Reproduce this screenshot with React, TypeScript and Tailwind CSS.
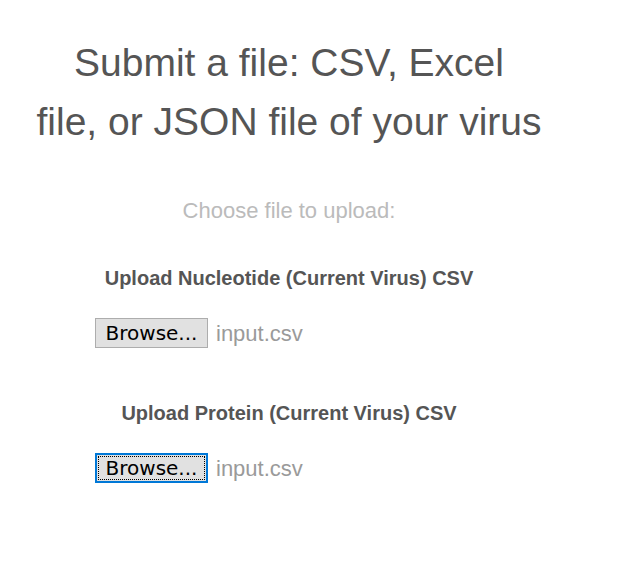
const FileRow = ({ focused }: { focused?: boolean }) => {
  return (
    <div className="w-[388px] mx-auto flex items-center gap-2 h-[30px]">
      <span
        className={
          focused
            ? "h-[30px] w-[113px] flex items-center justify-center bg-[#e1e1e1] border-2 border-[#0078d7] text-black text-[20px] font-['DejaVu_Sans',sans-serif] p-[1px]"
            : "h-[30px] w-[113px] flex items-center justify-center bg-[#e1e1e1] border border-[#adadad] text-black text-[20px] font-['DejaVu_Sans',sans-serif]"
        }
      >
        <span
          className={
            focused
              ? "w-full h-full flex items-center justify-center outline outline-1 outline-dotted outline-black -outline-offset-1"
              : "w-full h-full flex items-center justify-center"
          }
        >
          Browse...
        </span>
      </span>
      <span className="text-[22px] text-[#9a9a9a]">input.csv</span>
    </div>
  );
};

export default function App() {
  return (
    <div className="h-screen bg-white font-['Liberation_Sans',Arial,sans-serif]">
      <div className="w-[578px] text-center pt-[33px]">
        <h1 className="text-[39px] leading-[59px] text-[#555555]">
          Submit a file: CSV, Excel
          <br />
          file, or JSON file of your virus
        </h1>

        <p className="mt-[43px] text-[22px] text-[#bbbbbb]">Choose file to upload:</p>

        <div className="mt-[36px] flex flex-col">
          <h3 className="text-[20px] font-bold text-[#555555]">
            Upload Nucleotide (Current Virus) CSV
          </h3>
          <div className="mt-[25px]">
            <FileRow />
          </div>

          <h3 className="mt-[50px] text-[20px] font-bold text-[#555555]">
            Upload Protein (Current Virus) CSV
          </h3>
          <div className="mt-[25px]">
            <FileRow focused />
          </div>
        </div>
      </div>
    </div>
  );
}
